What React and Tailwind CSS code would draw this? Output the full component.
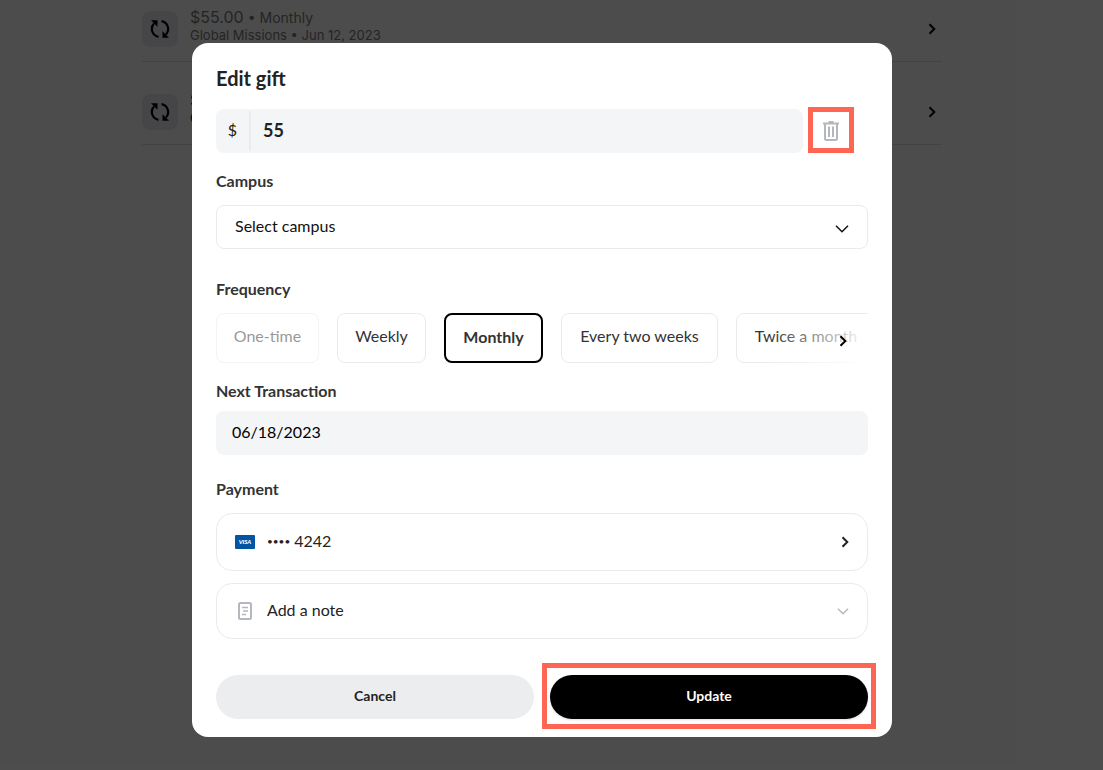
import React, { useState } from 'react';

const FREQUENCIES = [
  { id: 'once', label: 'One-time', width: 'w-[103px]', disabled: true },
  { id: 'weekly', label: 'Weekly', width: 'w-[89px]' },
  { id: 'monthly', label: 'Monthly', width: 'w-[99px]' },
  { id: 'biweekly', label: 'Every two weeks', width: 'w-[157px]' },
  { id: 'semimonthly', label: 'Twice a month', width: 'w-[140px]' },
];

const GIFTS = [
  { id: 1, amount: '$55.00', frequency: 'Monthly', fund: 'Global Missions', date: 'Jun 12, 2023', muted: true },
  { id: 2, amount: '$55.00', frequency: 'Monthly', fund: 'Global Missions', date: 'Jun 18, 2023' },
];

const SyncIcon = () => (
  <svg width="20" height="20" viewBox="0 0 20 20" fill="none" stroke="#000" strokeWidth="2.2" aria-hidden="true">
    <path d="M8.500 17.800A8 8 0 0 1 4 4.500" />
    <path d="M11.500 2.200A8 8 0 0 1 16 15.500" />
    <path d="M1 1.200h6.500v6.500z" fill="#000" stroke="none" />
    <path d="M19 18.800h-6.500v-6.500z" fill="#000" stroke="none" />
  </svg>
);

const ChevronRight = () => (
  <svg width="8" height="12" viewBox="0 0 8 12" fill="none" stroke="currentColor" strokeWidth="2" aria-hidden="true">
    <path d="M1.5 1.2 6.3 6l-4.8 4.8" />
  </svg>
);

const TrashIcon = () => (
  <svg width="16" height="20" viewBox="0 0 16 20" fill="none" stroke="#b4b7bd" strokeWidth="2" aria-hidden="true">
    <path d="M0 2.500h16M5.500 1h5" />
    <path d="M2 3v14.500q0 1.500 1.500 1.500h9q1.500 0 1.500-1.500V3" />
    <path d="M6 5.500v10.500M10 5.500v10.500" />
  </svg>
);

const NoteIcon = () => (
  <svg width="14" height="18" viewBox="0 0 14 18" fill="none" stroke="#b4b7bd" strokeWidth="2" aria-hidden="true">
    <rect x="1" y="1" width="12" height="16" rx="1.500" />
    <path d="M4 5.500h6M5 9h5M4 12.500h4" strokeWidth="1.600" />
  </svg>
);

const VisaIcon = () => (
  <svg width="20" height="14" viewBox="0 0 20 14" role="img" aria-label="Visa">
    <rect width="20" height="14" rx="1" fill="#0055a5" />
    <text x="10" y="9.200" textAnchor="middle" fontSize="6" fontWeight="900" fontStyle="italic" fill="#fff" fontFamily="Lato, sans-serif">VISA</text>
  </svg>
);

const Label = ({ htmlFor, id, children, className }) => {
  const Tag = htmlFor ? 'label' : 'h3';
  return (
    <Tag htmlFor={htmlFor} id={id} className={`block text-base leading-6 font-bold text-[#333] ${className}`}>{children}</Tag>
  );
};

const App = () => {
  const [amount, setAmount] = useState('55');
  const [date, setDate] = useState('06/18/2023');
  const [frequency, setFrequency] = useState('monthly');

  return (
    <div className="relative min-h-screen overflow-hidden bg-white pr-[19px] font-['Lato',sans-serif]">
      {/* Gift list behind the dialog, scrolled a little */}
      <div className="absolute inset-0 pr-[19px]">
        <ul className="mx-auto -mt-[21px] max-w-[800px] font-['Inter',sans-serif]">
          {GIFTS.map(g => (
            <li key={g.id} className="flex h-[83px] items-start border-b border-[#e0e0e0] pt-[29px]">
              <span className="mt-[3px] flex size-9 items-center justify-center rounded-lg bg-[#ebebf0]"><SyncIcon /></span>
              <div className={g.muted ? 'ml-3 flex-1 text-[#7a7a7a]' : 'ml-3 flex-1 text-[#222]'}>
                <p className="flex h-[18px] items-baseline gap-1 text-sm leading-[18px]"><span className="text-base leading-[18px]">{g.amount}</span> • {g.frequency}</p>
                <p className="text-[13px] leading-[18px]">{g.fund} • {g.date}</p>
              </div>
              <span className="mt-[15px] mr-[6px]"><ChevronRight /></span>
            </li>
          ))}
        </ul>
      </div>
      <div className="absolute inset-0 bg-black/70" />

      <form
        role="dialog"
        aria-labelledby="title"
        onSubmit={e => e.preventDefault()}
        className="relative mx-auto mt-[43px] max-w-[700px] rounded-2xl bg-white px-6 pt-[21px] pb-[18px]"
      >
        <h2 id="title" className="text-xl leading-7 font-bold text-[#222]">Edit gift</h2>

        <div className="mt-[17px] flex h-11 items-center">
          <div className="flex h-full flex-1 items-center rounded-lg bg-[#f4f5f7]">
            <label htmlFor="amount" className="flex h-10 w-[35px] items-center justify-center border-r-2 border-[#ebecee] pb-[2px] text-base text-[#222200]">$</label>
            <input id="amount" value={amount} onChange={e => setAmount(e.target.value)} className="h-full min-w-0 flex-1 bg-transparent px-3 pb-[2px] text-lg font-bold text-[#222] outline-none" />
          </div>
          <button type="button" aria-label="Delete gift" className="relative mr-[14px] ml-[5px] flex h-11 w-[46px] items-center justify-center">
            <TrashIcon />
            <span className="absolute inset-x-0 -top-[2px] bottom-0 border-[5px] border-[#ff6553]" />
          </button>
        </div>

        <Label htmlFor="campus" className="mt-4">Campus</Label>
        <div className="relative mt-3">
          <select id="campus" className="h-11 w-full appearance-none rounded-lg border border-[#ebebeb] bg-white px-[18px] pb-[2px] text-base text-[#111] outline-none">
            <option>Select campus</option>
          </select>
          <svg className="pointer-events-none absolute top-5 right-[19px]" width="14" height="8" viewBox="0 0 14 8" fill="none" stroke="#111" strokeWidth="1.500" aria-hidden="true">
            <path d="m1 .8 6 6 6-6" />
          </svg>
        </div>

        <Label id="frequency" className="mt-7">Frequency</Label>
        <div className="relative mt-3 overflow-hidden">
          <div role="group" aria-labelledby="frequency" className="flex gap-[18px]">
            {FREQUENCIES.map(f => (
              <button
                key={f.id}
                type="button"
                disabled={f.disabled}
                onClick={() => setFrequency(f.id)}
                className={
                  frequency === f.id
                    ? `h-[50px] shrink-0 rounded-lg border-2 border-black pb-[2px] text-base font-bold whitespace-nowrap text-[#333] ${f.width}`
                    : `h-[50px] shrink-0 rounded-lg border border-[#ebebeb] pb-1 text-base whitespace-nowrap text-[#333] disabled:opacity-50 ${f.width}`
                }
              >
                {f.label}
              </button>
            ))}
          </div>
          <button type="button" aria-label="More frequencies" className="absolute top-[1px] right-0 bottom-0 flex w-[100px] items-center justify-end bg-gradient-to-r from-transparent to-white pt-1 pr-[21px]">
            <ChevronRight />
          </button>
        </div>

        <Label htmlFor="next" className="mt-4">Next Transaction</Label>
        <input id="next" value={date} onChange={e => setDate(e.target.value)} className="mt-2 block h-11 w-full rounded-lg bg-[#f4f5f7] px-4 pb-1 text-base text-black outline-none" />

        <Label id="payment" className="mt-[22px]">Payment</Label>
        <button type="button" aria-describedby="payment" className="mt-3 flex h-[58px] w-full items-center rounded-2xl border border-[#ebebeb] px-[18px] text-base text-[#222]">
          <VisaIcon />
          <span className="ml-3 flex flex-1 items-center gap-1 pb-[2px] text-left"><span className="text-[10px]">••••</span>4242</span>
          <ChevronRight />
        </button>
        <button type="button" className="mt-3 flex h-14 w-full items-center rounded-2xl border border-[#ebebeb] px-[18px] text-base text-[#222]">
          <span className="flex w-5 justify-center"><NoteIcon /></span>
          <span className="ml-3 flex-1 pb-[2px] text-left">Add a note</span>
          <svg width="12" height="7" viewBox="0 0 12 7" fill="none" stroke="#b4b7bd" strokeWidth="1.500" aria-hidden="true">
            <path d="m1 .8 5 5 5-5" />
          </svg>
        </button>

        <div className="mt-9 grid grid-cols-2 gap-4">
          <button type="button" className="h-11 rounded-full bg-[#ecedef] pb-[2px] text-sm font-bold text-[#222]">Cancel</button>
          <div className="relative">
            <button type="submit" className="h-11 w-full rounded-full bg-black pb-[2px] text-sm font-bold text-white shadow-sm">Update</button>
            <span className="pointer-events-none absolute -inset-x-2 -top-3 -bottom-[10px] border-[5px] border-[#ff6553]" />
          </div>
        </div>
      </form>
    </div>
  );
};

export default App;
